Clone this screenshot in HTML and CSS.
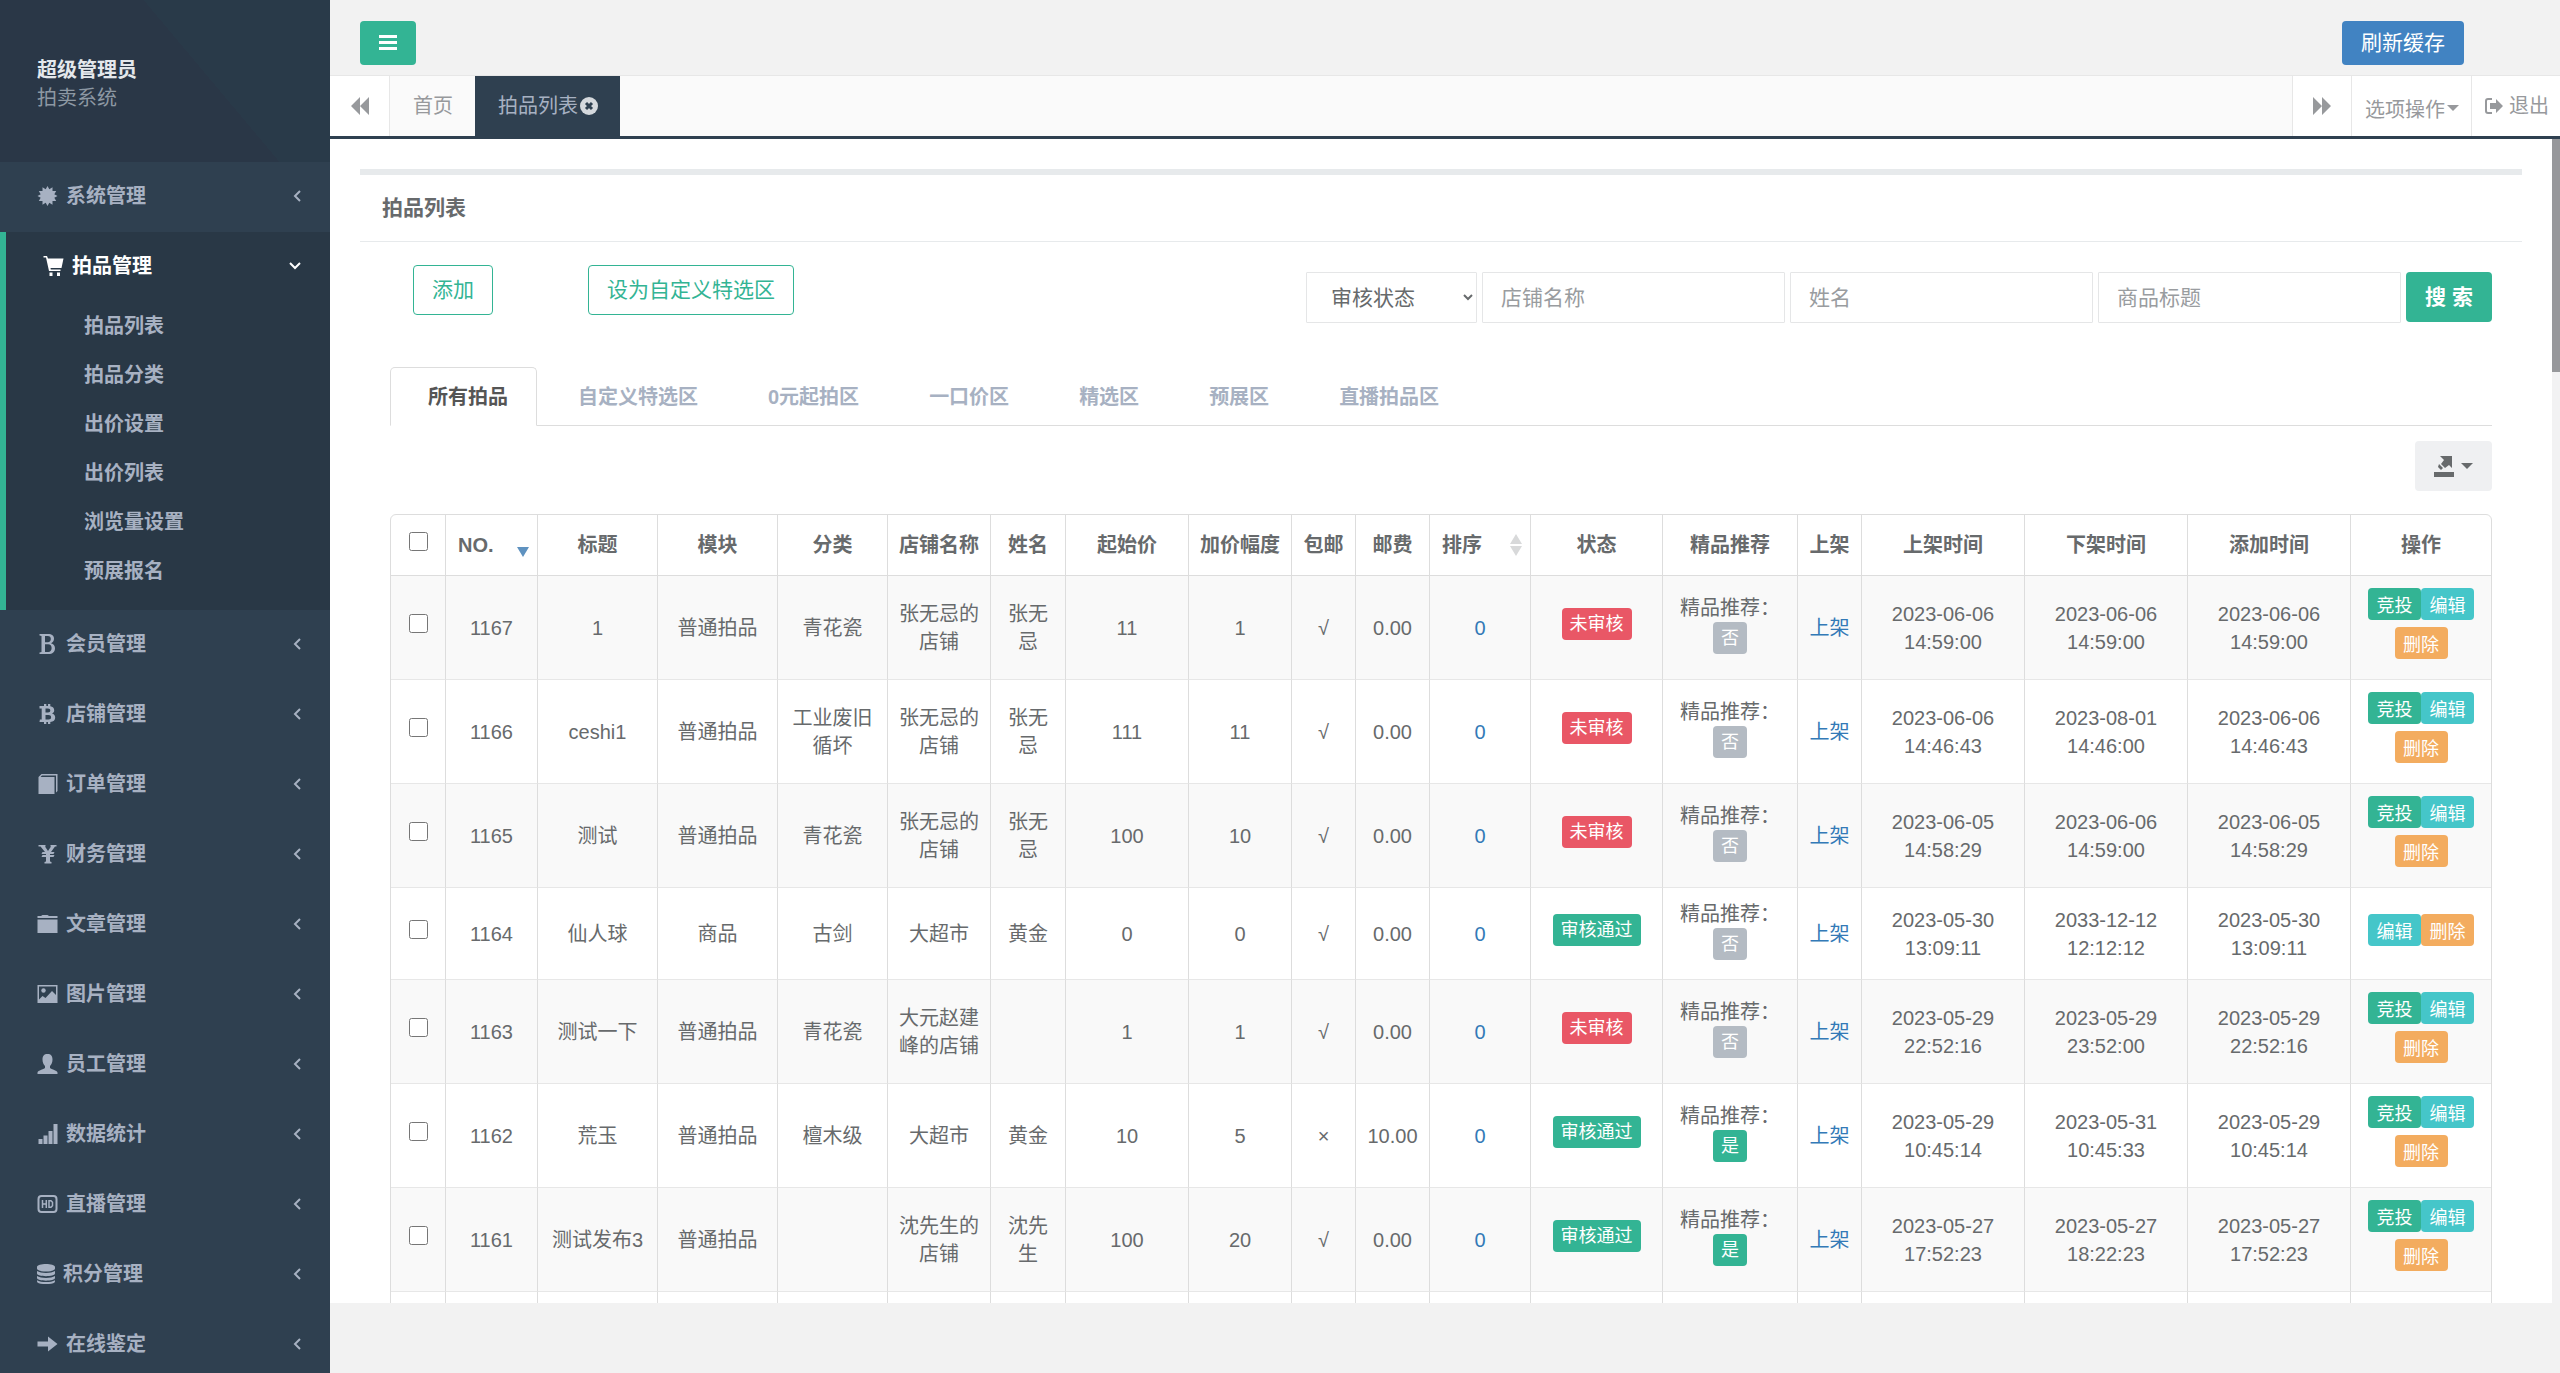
FILE: index.html
```html
<!DOCTYPE html>
<html lang="zh-CN">

<head>
  <meta charset="UTF-8">
  <title>拍卖系统</title>
  <meta name="viewport" content="width=device-width, initial-scale=1.0">
  <link rel="stylesheet" href="styles.css">
</head>
<body>

<nav class="sidebar">
  <div class="profile">
    <strong>超级管理员</strong>
    <span>拍卖系统</span>
  </div>

  <ul class="menu">
    <li>
      <a href="#">
        <svg class="icon" viewBox="0 0 20 20"><path d="M10 0l1.800 3.200L15 1.300v3.700l3.700 0-1.900 3.200L20 10l-3.200 1.800 1.900 3.200H15v3.700l-3.200-1.900L10 20l-1.800-3.200L5 18.700V15H1.300l1.900-3.200L0 10l3.200-1.800L1.300 5H5V1.300l3.200 1.900z"/></svg>
        <span>系统管理</span>
        <svg class="arrow" viewBox="0 0 8 12"><path d="M7 1L2 6l5 5"/></svg>
      </a>
    </li>
    <li class="active">
      <a href="#">
        <svg class="icon" viewBox="0 0 20 20"><path d="M0 0h3.500l1 2.500H20l-2 9.500H7l.3 1.500H17V15H5.500L2.500 1.500H0zM6 16.500h3V20H6zM13.500 16.500h3V20h-3z"/></svg>
        <span>拍品管理</span>
        <svg class="arrow down" viewBox="0 0 12 8"><path d="M1 1l5 5 5-5"/></svg>
      </a>
      <ul class="submenu">
        <li><a href="#">拍品列表</a></li>
        <li><a href="#">拍品分类</a></li>
        <li><a href="#">出价设置</a></li>
        <li><a href="#">出价列表</a></li>
        <li><a href="#">浏览量设置</a></li>
        <li><a href="#">预展报名</a></li>
      </ul>
    </li>
    <li>
      <a href="#">
        <svg class="icon" viewBox="0 0 20 20"><path fill-rule="evenodd" d="M2 0h8.500c4 0 6 1.800 6 4.800 0 2.200-1.200 3.700-3 4.400 2.500.6 4 2.300 4 5 0 3.800-2.500 5.800-6.500 5.800H2v-1.500l2-.5V2l-2-.5zM7.500 2v6.300h2.800c2 0 3-1.200 3-3.200S12.300 2 10.300 2zM7.500 10.300V18h3.200c2.300 0 3.400-1.500 3.400-3.900s-1.200-3.800-3.500-3.800z"/></svg>
        <span>会员管理</span>
        <svg class="arrow" viewBox="0 0 8 12"><path d="M7 1L2 6l5 5"/></svg>
      </a>
    </li>
    <li>
      <a href="#">
        <svg class="icon" viewBox="0 0 20 20"><path fill-rule="evenodd" d="M2 2h4.500V0h2.300v2h1.700V0h2.300v2.200c2.500.4 3.900 1.800 3.900 4 0 1.700-.8 2.800-2.200 3.400 2 .6 3.200 1.900 3.200 4 0 2.700-1.700 4.200-4.900 4.400v2h-2.300v-2H8.800v2H6.500v-2H2l.4-2.500h1.800v-11H2zM8 4.500v4h2.500c1.500 0 2.300-.7 2.300-2s-.8-2-2.300-2zM8 11v4.500h3c1.700 0 2.600-.8 2.600-2.200S12.700 11 11 11z"/></svg>
        <span>店铺管理</span>
        <svg class="arrow" viewBox="0 0 8 12"><path d="M7 1L2 6l5 5"/></svg>
      </a>
    </li>
    <li>
      <a href="#">
        <svg class="icon" viewBox="0 0 20 20"><path d="M4 0h16v17l-1.500 1.500V1.500H4.500L3 3h14v17H1V3z"/></svg>
        <span>订单管理</span>
        <svg class="arrow" viewBox="0 0 8 12"><path d="M7 1L2 6l5 5"/></svg>
      </a>
    </li>
    <li>
      <a href="#">
        <svg class="icon" viewBox="0 0 20 20"><path d="M1 1h7v1.500h-.500l3 4.500 3-4.500H13V1h6v1.500h-1.500L13.500 8H17l-1 2h-3.500v1H17l-1 2h-3.500v4.500l1.500.5v1.500H7V18l1.500-.5V13H4l1-2h3.500v-1H4l1-2h2.500L3 2.500H1z"/></svg>
        <span>财务管理</span>
        <svg class="arrow" viewBox="0 0 8 12"><path d="M7 1L2 6l5 5"/></svg>
      </a>
    </li>
    <li>
      <a href="#">
        <svg class="icon" viewBox="0 0 20 20"><path d="M0 2h3.500L5 1h5l1.500 1H20v2H0zM0 5.500h20V19H0z"/></svg>
        <span>文章管理</span>
        <svg class="arrow" viewBox="0 0 8 12"><path d="M7 1L2 6l5 5"/></svg>
      </a>
    </li>
    <li>
      <a href="#">
        <svg class="icon" viewBox="0 0 20 20"><path fill-rule="evenodd" d="M0 1h20v18H0zM1.500 2.500v13L5 12l3 2 6.500-7 4 4V2.500z"/><circle cx="6" cy="6.500" r="2.200"/></svg>
        <span>图片管理</span>
        <svg class="arrow" viewBox="0 0 8 12"><path d="M7 1L2 6l5 5"/></svg>
      </a>
    </li>
    <li>
      <a href="#">
        <svg class="icon" viewBox="0 0 20 20"><path d="M10 0c3.500 0 5 2 5 5.500 0 3-1 5-2.500 6.500v2c0 .8 7.500 2.500 7.500 4.500V20H0v-1.500C0 16.500 7.500 14.800 7.500 14v-2C6 10.500 5 8.500 5 5.500 5 2 6.500 0 10 0z"/></svg>
        <span>员工管理</span>
        <svg class="arrow" viewBox="0 0 8 12"><path d="M7 1L2 6l5 5"/></svg>
      </a>
    </li>
    <li>
      <a href="#">
        <svg class="icon" viewBox="0 0 20 20"><path d="M1 15h4v5H1zM6 11.500h4V20H6zM11 7h4v13h-4zM16 0h4v20h-4z"/></svg>
        <span>数据统计</span>
        <svg class="arrow" viewBox="0 0 8 12"><path d="M7 1L2 6l5 5"/></svg>
      </a>
    </li>
    <li>
      <a href="#">
        <svg class="icon" viewBox="0 0 20 20"><rect x="1" y="2" width="18" height="16" rx="3" fill="none" stroke="currentColor" stroke-width="2"/><path fill="none" stroke="currentColor" stroke-width="1.500" d="M5 6v8M8.800 6v8M5 10h3.800M11.500 6.700h2l1.500 1.500v3.600l-1.500 1.500h-2z"/></svg>
        <span>直播管理</span>
        <svg class="arrow" viewBox="0 0 8 12"><path d="M7 1L2 6l5 5"/></svg>
      </a>
    </li>
    <li>
      <a href="#">
        <svg class="icon narrow" viewBox="0 0 18 20"><path d="M0 3c0-4 18-4 18 0v1.500c0 4-18 4-18 0zM0 7c4 2.500 14 2.500 18 0v2.500c0 3.500-18 3.500-18 0zM0 12c4 2.500 14 2.500 18 0v2c0 3.500-18 3.500-18 0zM0 16.200c4 2.500 14 2.500 18 0V17.500c0 3.500-18 3.500-18 0z"/></svg>
        <span>积分管理</span>
        <svg class="arrow" viewBox="0 0 8 12"><path d="M7 1L2 6l5 5"/></svg>
      </a>
    </li>
    <li>
      <a href="#">
        <svg class="icon" viewBox="0 0 20 20"><path d="M0 7.500h10.500V2.500L20 10l-9.500 7.500v-5H0z"/></svg>
        <span>在线鉴定</span>
        <svg class="arrow" viewBox="0 0 8 12"><path d="M7 1L2 6l5 5"/></svg>
      </a>
    </li>
  </ul>
</nav>

<div class="main">
  <header class="topbar">
    <button class="btn btn-toggle" aria-label="菜单"><svg viewBox="0 0 18 15"><path d="M0 0h18v3H0zM0 6h18v3H0zM0 12h18v3H0z"/></svg></button>
    <button class="btn btn-refresh">刷新缓存</button>
  </header>

  <div class="page-tabs">
    <button class="roll" aria-label="向左"><svg viewBox="0 0 18 18"><path d="M9 0v18L0 9zM18 0v18L9 9z"/></svg></button>
    <nav class="tab-list">
      <a href="#">首页</a>
      <a href="#" class="current">拍品列表
        <svg viewBox="0 0 18 18"><circle cx="9" cy="9" r="9"/><path d="M6 6l6 6M12 6l-6 6"/></svg>
      </a>
    </nav>
    <button class="roll right" aria-label="向右"><svg viewBox="0 0 18 18"><path d="M0 0v18l9-9zM9 0v18l9-9z"/></svg></button>
    <button class="options">选项操作 <i class="caret"></i></button>
    <a href="#" class="exit"><svg viewBox="0 0 18 16"><path fill="none" stroke="currentColor" stroke-width="2" d="M7 1H3Q1 1 1 3v10q0 2 2 2h4"/><path d="M5 5h6V1l7 7-7 7v-4H5z"/></svg>退出</a>
  </div>

  <div class="content">
    <div class="ibox">
      <div class="ibox-title">拍品列表</div>
      <div class="ibox-content">
        <div class="toolbar">
          <div class="actions">
            <button class="btn btn-outline">添加</button>
            <button class="btn btn-outline">设为自定义特选区</button>
          </div>
          <form class="search">
            <select aria-label="审核状态"><option>审核状态</option></select>
            <input type="text" placeholder="店铺名称" aria-label="店铺名称">
            <input type="text" placeholder="姓名" aria-label="姓名">
            <input type="text" placeholder="商品标题" aria-label="商品标题">
            <button type="button" class="btn btn-search">搜 索</button>
          </form>
        </div>

        <nav class="nav-tabs">
          <a href="#" class="active">所有拍品</a>
          <a href="#">自定义特选区</a>
          <a href="#">0元起拍区</a>
          <a href="#">一口价区</a>
          <a href="#">精选区</a>
          <a href="#">预展区</a>
          <a href="#">直播拍品区</a>
        </nav>

        <div class="export">
          <button class="btn btn-export" aria-label="导出">
            <svg viewBox="0 0 20 21"><path d="M0 16h20v5H0zM6 0h12v12l-3-3-4 3-4-4 3-4z"/><path d="M5 8l4 4-2 2-3-3z"/></svg>
            <i class="caret"></i>
          </button>
        </div>

        <div class="table-wrap">
          <table>
            <colgroup>
              <col class="w-check"><col class="w-no"><col class="w-title"><col class="w-title"><col class="w-cate">
              <col class="w-shop"><col class="w-name"><col class="w-price"><col class="w-shop"><col class="w-s">
              <col class="w-fee"><col class="w-sort"><col class="w-status"><col class="w-rec"><col class="w-s">
              <col class="w-time"><col class="w-time"><col class="w-time"><col class="w-ops">
            </colgroup>
            <thead>
              <tr>
                <th><input type="checkbox" aria-label="全选"></th>
                <th><div class="sortable">NO.<svg viewBox="0 0 12 24"><path class="desc" d="M0 14h12l-6 10z"/></svg></div></th>
                <th>标题</th>
                <th>模块</th>
                <th>分类</th>
                <th>店铺名称</th>
                <th>姓名</th>
                <th>起始价</th>
                <th>加价幅度</th>
                <th>包邮</th>
                <th>邮费</th>
                <th><div class="sortable">排序<svg viewBox="0 0 12 24"><path d="M0 11h12L6 1zM0 13h12l-6 10z"/></svg></div></th>
                <th>状态</th>
                <th>精品推荐</th>
                <th>上架</th>
                <th>上架时间</th>
                <th>下架时间</th>
                <th>添加时间</th>
                <th>操作</th>
              </tr>
            </thead>
            <tbody>
              <tr>
                <td><input type="checkbox" aria-label="1167"></td>
                <td>1167</td><td>1</td><td>普通拍品</td><td>青花瓷</td><td>张无忌的店铺</td><td>张无忌</td>
                <td>11</td><td>1</td><td>√</td><td>0.00</td><td><a href="#">0</a></td>
                <td><span class="label danger">未审核</span></td>
                <td>精品推荐：<span class="label gray">否</span></td>
                <td><a href="#">上架</a></td>
                <td>2023-06-06 14:59:00</td><td>2023-06-06 14:59:00</td><td>2023-06-06 14:59:00</td>
                <td><div class="ops"><button class="bid">竞投</button><button class="edit">编辑</button><button class="del">删除</button></div></td>
              </tr>
              <tr>
                <td><input type="checkbox" aria-label="1166"></td>
                <td>1166</td><td>ceshi1</td><td>普通拍品</td><td>工业废旧循坏</td><td>张无忌的店铺</td><td>张无忌</td>
                <td>111</td><td>11</td><td>√</td><td>0.00</td><td><a href="#">0</a></td>
                <td><span class="label danger">未审核</span></td>
                <td>精品推荐：<span class="label gray">否</span></td>
                <td><a href="#">上架</a></td>
                <td>2023-06-06 14:46:43</td><td>2023-08-01 14:46:00</td><td>2023-06-06 14:46:43</td>
                <td><div class="ops"><button class="bid">竞投</button><button class="edit">编辑</button><button class="del">删除</button></div></td>
              </tr>
              <tr>
                <td><input type="checkbox" aria-label="1165"></td>
                <td>1165</td><td>测试</td><td>普通拍品</td><td>青花瓷</td><td>张无忌的店铺</td><td>张无忌</td>
                <td>100</td><td>10</td><td>√</td><td>0.00</td><td><a href="#">0</a></td>
                <td><span class="label danger">未审核</span></td>
                <td>精品推荐：<span class="label gray">否</span></td>
                <td><a href="#">上架</a></td>
                <td>2023-06-05 14:58:29</td><td>2023-06-06 14:59:00</td><td>2023-06-05 14:58:29</td>
                <td><div class="ops"><button class="bid">竞投</button><button class="edit">编辑</button><button class="del">删除</button></div></td>
              </tr>
              <tr>
                <td><input type="checkbox" aria-label="1164"></td>
                <td>1164</td><td>仙人球</td><td>商品</td><td>古剑</td><td>大超市</td><td>黄金</td>
                <td>0</td><td>0</td><td>√</td><td>0.00</td><td><a href="#">0</a></td>
                <td><span class="label primary">审核通过</span></td>
                <td>精品推荐：<span class="label gray">否</span></td>
                <td><a href="#">上架</a></td>
                <td>2023-05-30 13:09:11</td><td>2033-12-12 12:12:12</td><td>2023-05-30 13:09:11</td>
                <td><div class="ops"><button class="edit">编辑</button><button class="del">删除</button></div></td>
              </tr>
              <tr>
                <td><input type="checkbox" aria-label="1163"></td>
                <td>1163</td><td>测试一下</td><td>普通拍品</td><td>青花瓷</td><td>大元赵建峰的店铺</td><td></td>
                <td>1</td><td>1</td><td>√</td><td>0.00</td><td><a href="#">0</a></td>
                <td><span class="label danger">未审核</span></td>
                <td>精品推荐：<span class="label gray">否</span></td>
                <td><a href="#">上架</a></td>
                <td>2023-05-29 22:52:16</td><td>2023-05-29 23:52:00</td><td>2023-05-29 22:52:16</td>
                <td><div class="ops"><button class="bid">竞投</button><button class="edit">编辑</button><button class="del">删除</button></div></td>
              </tr>
              <tr>
                <td><input type="checkbox" aria-label="1162"></td>
                <td>1162</td><td>荒玉</td><td>普通拍品</td><td>檀木级</td><td>大超市</td><td>黄金</td>
                <td>10</td><td>5</td><td>×</td><td>10.00</td><td><a href="#">0</a></td>
                <td><span class="label primary">审核通过</span></td>
                <td>精品推荐：<span class="label primary">是</span></td>
                <td><a href="#">上架</a></td>
                <td>2023-05-29 10:45:14</td><td>2023-05-31 10:45:33</td><td>2023-05-29 10:45:14</td>
                <td><div class="ops"><button class="bid">竞投</button><button class="edit">编辑</button><button class="del">删除</button></div></td>
              </tr>
              <tr>
                <td><input type="checkbox" aria-label="1161"></td>
                <td>1161</td><td>测试发布3</td><td>普通拍品</td><td></td><td>沈先生的店铺</td><td>沈先生</td>
                <td>100</td><td>20</td><td>√</td><td>0.00</td><td><a href="#">0</a></td>
                <td><span class="label primary">审核通过</span></td>
                <td>精品推荐：<span class="label primary">是</span></td>
                <td><a href="#">上架</a></td>
                <td>2023-05-27 17:52:23</td><td>2023-05-27 18:22:23</td><td>2023-05-27 17:52:23</td>
                <td><div class="ops"><button class="bid">竞投</button><button class="edit">编辑</button><button class="del">删除</button></div></td>
              </tr>
              <tr>
                <td></td><td></td><td></td><td></td><td></td><td></td><td></td><td></td><td></td><td></td>
                <td></td><td></td><td></td><td></td><td></td><td></td><td></td><td></td><td></td>
              </tr>
            </tbody>
          </table>
        </div>
      </div>
    </div>
    <div class="scrollbar"><div class="thumb"></div></div>
  </div>

  <footer class="footer"></footer>
</div>

</body>
</html>
```

FILE: styles.css
```css
* {
  box-sizing: border-box;
}

html, body {
  margin: 0;
  padding: 0;
  height: 100%;
}

body {
  display: flex;
  overflow: hidden;
  font-family: "Liberation Sans", "Noto Sans CJK SC", sans-serif;
  font-size: 20px;
  line-height: 28px;
  color: #676a6c;
  background: #f2f2f2;
}

a {
  color: #337ab7;
  text-decoration: none;
}

button, input, select {
  font-family: inherit;
  font-size: 21px;
  color: inherit;
}

button {
  border: none;
  background: none;
  padding: 0;
  cursor: pointer;
}

svg {
  fill: currentColor;
  flex: none;
}

ul {
  list-style: none;
  margin: 0;
  padding: 0;
}

/* 左侧菜单 */
.sidebar {
  flex: none;
  width: 330px;
  background: #2f4050;
  overflow: hidden;
}

.profile {
  display: flex;
  flex-direction: column;
  height: 162px;
  padding: 56px 37px 0;
  color: #8d98a3;
  background: linear-gradient(50deg, #2a3747 60%, #293a49 60%);
}

.profile strong {
  color: #e4e8ec;
}

.menu a {
  display: flex;
  align-items: center;
  gap: 8px;
  height: 70px;
  padding: 0 29px 2px 37px;
  font-weight: bold;
  color: #a7b1c2;
}

.icon {
  width: 21px;
  height: 20px;
}

.icon.narrow {
  width: 18px;
}

.arrow {
  width: 8px;
  height: 12px;
  margin-left: auto;
  fill: none;
  stroke: currentColor;
  stroke-width: 2;
}

.arrow.down {
  width: 12px;
  height: 8px;
}

.menu .active {
  padding-bottom: 14px;
  border-left: 6px solid #33b494;
  background: #293846;
}

.menu .active > a {
  color: #fff;
}

.menu .submenu a {
  height: 49px;
  padding: 0 0 2px 78px;
}

/* 顶部 */
.main {
  flex: 1;
  min-width: 0;
  display: flex;
  flex-direction: column;
}

.btn {
  border-radius: 4px;
  line-height: 28px;
}

.topbar {
  display: flex;
  justify-content: space-between;
  align-items: flex-start;
  height: 76px;
  padding: 21px 96px 0 30px;
  border-bottom: 1px solid #e7e7e7;
}

.btn-toggle {
  width: 56px;
  height: 44px;
  color: #fff;
  background: #33b494;
}

.btn-toggle svg {
  width: 18px;
  height: 15px;
}

.btn-refresh {
  height: 44px;
  padding: 0 19px;
  color: #fff;
  background: #4183c2;
}

.page-tabs {
  display: flex;
  height: 63px;
  color: #97999c;
  background: #fafafa;
  border-bottom: 3px solid #2f4050;
}

.roll {
  width: 60px;
  padding-top: 4px;
  background: #fff;
  border-right: 1px solid #e7e7e7;
}

.roll.right {
  border-left: 1px solid #e7e7e7;
}

.roll svg {
  width: 18px;
  height: 18px;
}

.tab-list {
  flex: 1;
  display: flex;
}

.tab-list a {
  display: flex;
  align-items: center;
  gap: 2px;
  padding: 0 22px 0 23px;
  color: #97999c;
}

.tab-list .current {
  color: #a7b1c2;
  background: #2f4050;
}

.tab-list svg {
  width: 18px;
  height: 18px;
  color: #d5d9dd;
}

.tab-list svg path {
  stroke: #2f4050;
  stroke-width: 3;
}

.caret {
  display: inline-block;
  border: 6px solid transparent;
  border-top-color: currentColor;
  border-bottom: none;
}

.options {
  display: flex;
  align-items: center;
  gap: 2px;
  padding: 4px 12px 0 13px;
  font-size: 20px;
  background: #fff;
  border-right: 1px solid #e7e7e7;
}

.exit {
  display: flex;
  align-items: center;
  gap: 6px;
  padding: 0 11px 0 13px;
  color: #97999c;
  background: #fff;
}

.exit svg {
  width: 18px;
  height: 16px;
}

/* 内容区 */
.content {
  flex: 1;
  min-height: 0;
  display: flex;
  overflow: hidden;
  background: #fff;
}

.ibox {
  flex: 1;
  min-width: 0;
  margin: 30px;
  border-top: 6px solid #e7eaec;
}

.ibox-title {
  height: 67px;
  padding: 19px 22px;
  font-size: 21px;
  font-weight: bold;
  border-bottom: 1px solid #e7eaec;
}

.ibox-content {
  padding: 23px 30px;
}

.scrollbar {
  flex: none;
  width: 8px;
  background: #f2f2f3;
}

.thumb {
  height: 20%;
  background: #97989b;
}

.toolbar {
  display: flex;
  justify-content: space-between;
}

.actions {
  display: flex;
  gap: 95px;
  padding-left: 23px;
}

.btn-outline {
  height: 50px;
  padding: 0 18px;
  color: #33b494;
  border: 1px solid #33b494;
}

.search {
  display: flex;
  gap: 5px;
  padding-top: 7px;
}

.search input, .search select {
  width: 303px;
  height: 51px;
  padding: 0 18px;
  background: #fff;
  border: 1px solid #e5e6e7;
  border-radius: 1px;
}

.search select {
  width: 171px;
  padding: 0 0 0 20px;
}

.search input::placeholder {
  color: #999c9f;
}

.btn-search {
  width: 86px;
  height: 50px;
  font-weight: bold;
  color: #fff;
  background: #33b494;
}

.nav-tabs {
  display: flex;
  gap: 3px;
  height: 59px;
  margin-top: 44px;
  border-bottom: 1px solid #ddd;
}

.nav-tabs a {
  height: 59px;
  padding: 15px 28px 13px 37px;
  font-weight: bold;
  color: #a7b1c2;
  border: 1px solid transparent;
  border-radius: 5px 5px 0 0;
}

.nav-tabs .active {
  color: #555;
  background: #fff;
  border-color: #ddd #ddd #fff;
}

.export {
  display: flex;
  justify-content: flex-end;
  padding: 15px 0 23px;
}

.btn-export {
  display: flex;
  justify-content: center;
  align-items: center;
  gap: 7px;
  width: 77px;
  height: 50px;
  background: #eff0f2;
}

.btn-export svg {
  width: 20px;
  height: 21px;
}

/* 表格 */
.table-wrap {
  border: 1px solid #ddd;
  border-radius: 6px;
}

table {
  width: 100%;
  table-layout: fixed;
  border-spacing: 0;
}

.w-check { width: 55px; }
.w-no { width: 92px; }
.w-title { width: 120px; }
.w-cate { width: 110px; }
.w-shop { width: 103px; }
.w-name { width: 75px; }
.w-price { width: 123px; }
.w-s { width: 64px; }
.w-fee { width: 74px; }
.w-sort { width: 101px; }
.w-status { width: 132px; }
.w-rec { width: 135px; }
.w-time { width: 163px; }
.w-ops { width: 140px; }

th, td {
  height: 92px;
  padding: 12px 8px;
  text-align: center;
  vertical-align: middle;
  border-right: 1px solid #ddd;
  border-bottom: 1px solid #e7e7e7;
}

th {
  height: 61px;
  border-bottom-color: #ddd;
}

th:last-child, td:last-child {
  border-right: none;
}

tbody tr:nth-child(odd) {
  background: #f9f9f9;
}

td input, th input {
  display: block;
  width: 19px;
  height: 19px;
  margin: 0 auto 8px;
}

.sortable {
  display: flex;
  justify-content: space-between;
  align-items: center;
  padding-left: 4px;
}

.sortable svg {
  width: 12px;
  height: 24px;
  color: #d8d9da;
}

.sortable .desc {
  fill: #5f92c0;
}

.label {
  display: block;
  width: fit-content;
  margin: 0 auto 7px;
  padding: 0 8px;
  font-size: 18px;
  line-height: 32px;
  color: #fff;
  border-radius: 4px;
}

.danger { background: #e95766; }
.primary { background: #33b494; }
.gray { background: #b4bbc3; }

.ops {
  display: flex;
  flex-wrap: wrap;
  justify-content: center;
  row-gap: 7px;
  margin-bottom: 8px;
}

.ops button {
  width: 53px;
  height: 32px;
  font-size: 18px;
  color: #fff;
  border-radius: 4px;
}

.ops .bid { background: #33b494; }
.ops .edit { background: #45c6c9; }
.ops .del { background: #f3ac5f; }

.footer {
  flex: none;
  height: 70px;
}
```
